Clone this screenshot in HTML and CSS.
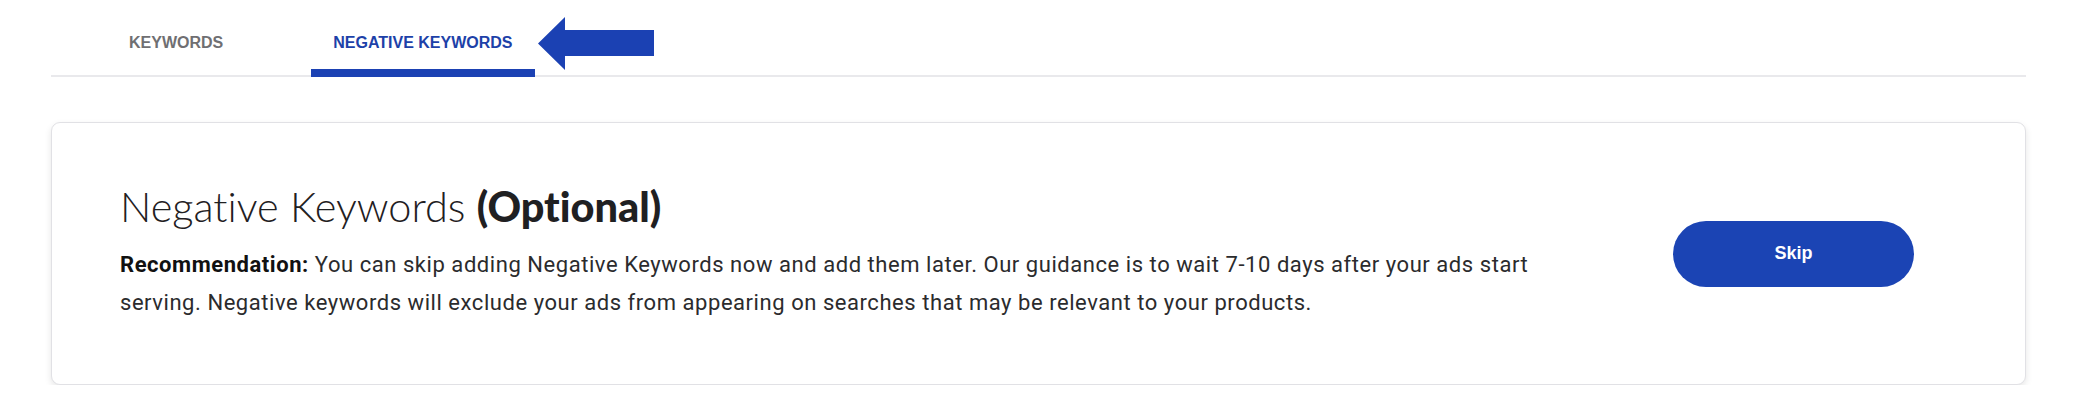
FILE: index.html
```html
<!DOCTYPE html>
<html lang="en">
<head>
<meta charset="utf-8">
<title>Negative Keywords</title>
<link rel="stylesheet" href="styles.css">
</head>
<body>
<div class="page">
  <nav class="tabs">
    <a class="tab">KEYWORDS</a>
    <a class="tab tab-active">NEGATIVE KEYWORDS</a>
    <svg class="callout-arrow" width="116" height="53" viewBox="0 0 116 53" aria-hidden="true">
      <polygon points="0,26.5 27,0 27,13 116,13 116,39 27,39 27,53" fill="#1b41b3"/>
    </svg>
  </nav>
  <section class="card">
    <div class="card-text">
      <h2 class="card-title">Negative Keywords <strong>(Optional)</strong></h2>
      <p class="card-body"><strong>Recommendation:</strong> You can skip adding Negative Keywords now and add them later. Our guidance is to wait 7-10 days after your ads start serving. Negative keywords will exclude your ads from appearing on searches that may be relevant to your products.</p>
    </div>
    <button class="skip-btn" type="button">Skip</button>
  </section>
</div>
</body>
</html>
```
FILE: styles.css
```css
* { box-sizing: border-box; }

html, body {
  margin: 0;
  padding: 0;
  background: #ffffff;
}

.page {
  padding: 0 52px 0 51px;
}

.tabs {
  position: relative;
  display: flex;
  gap: 66px;
  padding-left: 56px;
  border-bottom: 2px solid #e9e9ec;
}

.tab {
  display: block;
  height: 77px;
  margin-bottom: -2px;
  padding: 34px 22px 0;
  border-bottom: 8px solid transparent;
  font-family: "Liberation Sans", Arial, sans-serif;
  font-weight: 700;
  font-size: 16px;
  line-height: 18px;
  color: #6f6f72;
}

.tab-active {
  color: #1d41a8;
  border-bottom-color: #1b41b3;
}

.callout-arrow {
  position: absolute;
  left: 487px;
  top: 17px;
}

.card {
  margin-top: 45px;
  display: flex;
  align-items: flex-start;
  padding: 59px 111px 62px 68px;
  border: 1px solid #e1e1e5;
  border-radius: 9px;
  background: #ffffff;
  box-shadow: 0 3px 7px rgba(0, 0, 0, 0.10);
}

.card-text {
  flex: 0 0 1440px;
  max-width: 1440px;
}

.card-title {
  margin: 0 0 16px;
  font-family: Lato, "Liberation Sans", sans-serif;
  font-weight: 300;
  font-size: 41.5px;
  line-height: 48px;
  color: #1f2022;
  font-variant-ligatures: none;
}

.card-title strong {
  font-weight: 900;
}

.card-body {
  margin: 0;
  font-family: Roboto, "Liberation Sans", sans-serif;
  font-size: 22px;
  letter-spacing: 0.55px;
  line-height: 38px;
  color: #2b2b2d;
}

.card-body strong {
  font-weight: 700;
  color: #111111;
}

.skip-btn {
  align-self: center;
  margin-left: auto;
  margin-top: 3px;
  width: 241px;
  height: 66px;
  border: none;
  border-radius: 33px;
  background: #1b44b4;
  color: #ffffff;
  font-family: "Liberation Sans", Arial, sans-serif;
  font-weight: 700;
  font-size: 18px;
  cursor: pointer;
}
```
